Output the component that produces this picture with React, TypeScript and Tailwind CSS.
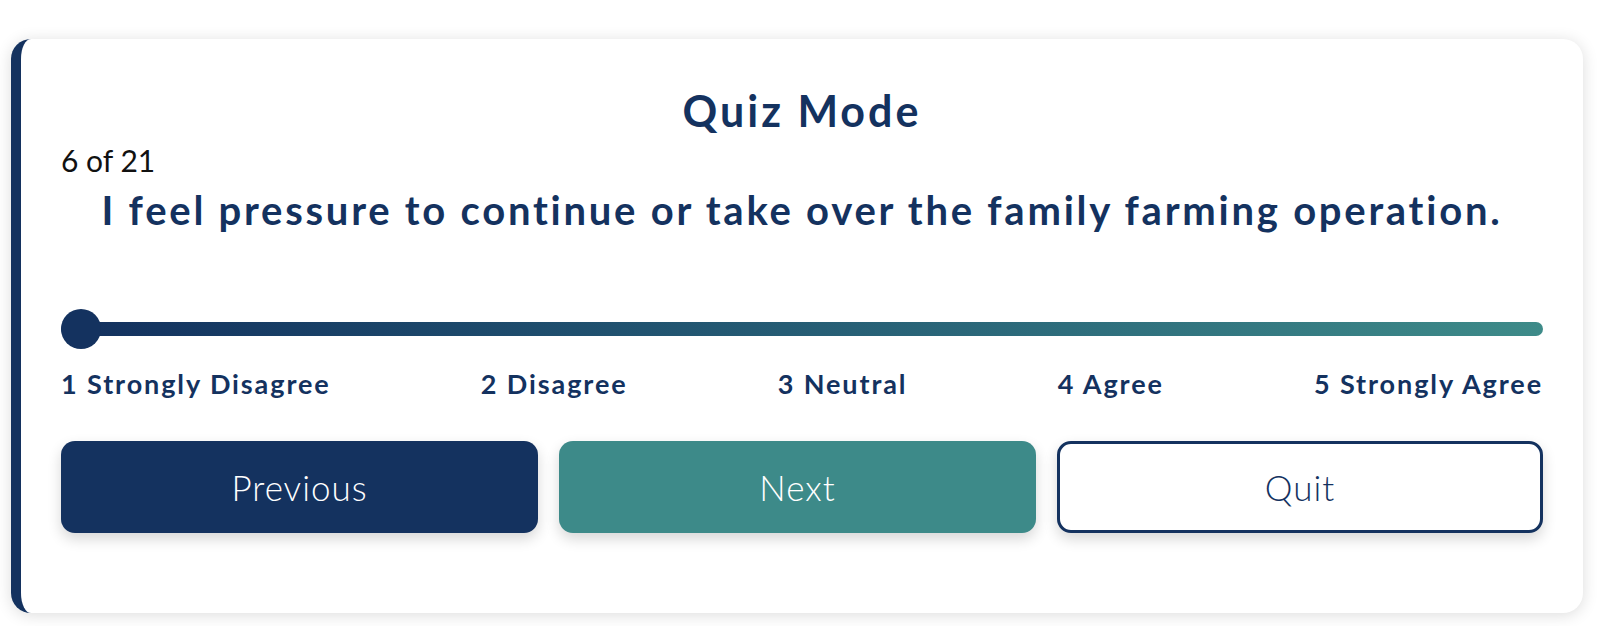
import React from 'react';

const labels = ['1 Strongly Disagree', '2 Disagree', '3 Neutral', '4 Agree', '5 Strongly Agree'];

export default function App() {
  return (
    <div className="w-full h-[626px] bg-white pt-[39px] pl-[11px] pr-[15px] font-['Lato',sans-serif]">
      <div className="h-[574px] bg-white rounded-[20px] border-l-[10px] border-[#14325f] shadow-[0_2px_16px_rgba(0,0,0,0.14)] px-[40px] pt-[46px]">
        <h1 className="text-center text-[43px] leading-[52px] font-bold text-[#14325f] tracking-[3px]">Quiz Mode</h1>
        <div className="mt-[5px] text-[30px] leading-[37px] font-normal text-[#111]">6 of 21</div>
        <p className="mt-[8px] text-center text-[40px] leading-[46px] font-bold text-[#14325f] tracking-[2.75px]">
          I feel pressure to continue or take over the family farming operation.
        </p>

        <div className="relative mt-[76px] h-[40px] flex items-center">
          <div className="w-full h-[14px] rounded-full bg-gradient-to-r from-[#13305e] to-[#3e8b89]" />
          <div className="absolute left-0 top-0 w-[40px] h-[40px] rounded-full bg-[#14325f]" />
        </div>

        <div className="mt-[19px] flex justify-between text-[27px] leading-[31px] font-bold text-[#14325f] tracking-[1.9px]">
          {labels.map((l) => (
            <span key={l}>{l}</span>
          ))}
        </div>

        <div className="mt-[42px] grid grid-cols-[477px_477px_1fr] gap-[21px]">
          <button className="h-[92px] rounded-[14px] bg-[#14325f] text-white text-[35px] tracking-[1px] font-light shadow-[0_6px_14px_rgba(0,0,0,0.16)]">
            Previous
          </button>
          <button className="h-[92px] rounded-[14px] bg-[#3d8a89] text-white text-[35px] tracking-[1px] font-light shadow-[0_6px_14px_rgba(0,0,0,0.16)]">
            Next
          </button>
          <button className="h-[92px] rounded-[14px] bg-white border-[3px] border-[#14325f] text-[#14325f] text-[35px] tracking-[1px] font-light shadow-[0_6px_14px_rgba(0,0,0,0.16)]">
            Quit
          </button>
        </div>
      </div>
    </div>
  );
}
